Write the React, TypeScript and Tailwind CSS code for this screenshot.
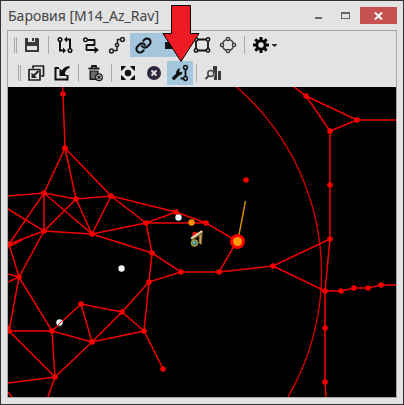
import type { ReactNode } from "react";
import { Link } from "lucide-react";

type ToolProps = { label: string; active?: boolean; children: ReactNode };

function Tool({ label, active = false, children }: ToolProps) {
  return (
    <button
      type="button"
      aria-label={label}
      aria-pressed={active}
      className={`flex h-6 w-[26px] shrink-0 items-center justify-center ${active ? "bg-[#a3c6dc]" : ""}`}
    >
      {children}
    </button>
  );
}

function Icon({ children, color = "#111" }: { children: ReactNode; color?: string }) {
  return (
    <svg width="18" height="18" viewBox="0 0 18 18" fill="none" stroke={color} strokeWidth="2" aria-hidden="true">
      {children}
    </svg>
  );
}

function Separator() {
  return (
    <div className="flex w-[7px] shrink-0 justify-center">
      <div className="h-[18px] w-px bg-[#a8a8a8]" />
    </div>
  );
}

function Grip() {
  return <div className="mr-0.5 h-4 w-[3px] shrink-0 border-x border-[#a8a8a8]" />;
}

const nodes: [number, number][] = [
  [63, 94], [65, 148], [44, 193], [76, 199], [111, 196], [44, 231], [92, 234],
  [9, 244], [19, 277], [9, 331], [52, 331], [81, 304], [122, 312], [92, 342],
  [55, 377], [176, 212], [146, 223], [206, 223], [152, 253], [149, 282],
  [181, 272], [219, 272], [144, 331], [163, 369], [246, 180], [273, 266],
  [306, 96], [357, 120], [330, 131], [330, 185], [330, 239], [325, 291],
  [341, 291], [354, 288], [368, 288], [381, 285], [325, 328], [325, 382],
];

const edges = [
  "M62.5 87L63 94L65 148L44 193L76 199L111 196L176 212L206 223L237 241L219 272L273 266L330 239",
  "M65 148L76 199L92 234L111 196L65 148",
  "M8 196L44 193V231L92 234L146 223L176 212",
  "M76 199L44 231L9 244L44 193L92 234L152 253L181 272H219",
  "M8 209L44 231L19 277L9 244M8 247L22 240",
  "M111 196L146 223H206M146 223L152 253L149 282L181 272",
  "M8 274L19 277L8 282M19 277L9 331H52L19 277",
  "M52 331L81 304L122 312L144 331L92 342L52 331L55 377L92 342L122 312L149 282L144 331L163 369",
  "M81 304L92 342M9 331L55 377L48 397M8 383L55 377M8 392L12 397M8 325L9 331",
  "M294 87L306 96L357 120H396M306 96L330 131L357 120",
  "M330 131V239L325 291V382L326 397M273 266L325 291H341L354 288H368L381 285H396",
];

function MapView() {
  return (
    <svg className="block aspect-[388/310] w-full bg-black" viewBox="8 87 388 310" role="img" aria-label="M14_Az_Rav">
      <circle cx="75.5" cy="273" r="246" fill="none" stroke="#d90000" strokeWidth="1.3" />
      <g fill="none" stroke="#f00000" strokeWidth="1.5">
        {edges.map((d) => <path key={d} d={d} />)}
      </g>
      <g fill="#f80000">
        {nodes.map(([x, y]) => <circle key={`${x}-${y}`} cx={x} cy={y} r="2.8" />)}
      </g>
      <path d="M245.500 201L238 240" stroke="#e09000" strokeWidth="1.4" />
      <circle cx="237.500" cy="241.500" r="7.500" fill="#f80000" />
      <circle cx="237.500" cy="241.500" r="4.500" fill="#ff9a00" />
      <g fill="#f0f6fa">
        <circle cx="178.500" cy="217.500" r="3.200" />
        <circle cx="121.500" cy="268.500" r="3.200" />
        <circle cx="59.500" cy="322.500" r="3.200" />
      </g>
      <path d="M56 327L62 321" stroke="#f00000" strokeWidth="1" />
      <circle cx="191.500" cy="222.500" r="3.200" fill="#ff8c00" />
      <circle cx="195" cy="234.500" r="2.800" fill="#e01010" />
      <path d="M191 239L203 230.500L201.500 245L198.500 243L199 236L193 240Z" fill="#8d6f3c" />
      <path d="M191 238.500L202 231" stroke="#eee0ba" strokeWidth="1.600" />
      <path d="M200.500 235V244" stroke="#c79b4e" strokeWidth="1.200" />
      <circle cx="194.500" cy="243" r="3" fill="#3f7f91" stroke="#a39a30" strokeWidth="1.400" />
      <circle cx="194" cy="242.500" r="1" fill="#8bd0dd" />
    </svg>
  );
}

export default function App() {
  return (
    <main className="relative border border-[#343236] bg-[#e3e3e3] px-1.5 pb-1.5 font-['Noto_Sans','Open_Sans',sans-serif]">
      <header className="flex h-[29px] items-center">
        <h1 className="min-w-0 flex-1 truncate pl-px text-[14px] leading-5 text-[#444]">Баровия [M14_Az_Rav]</h1>
        <button type="button" aria-label="Свернуть" className="flex h-[17px] w-[27px] items-center justify-center">
          <svg width="9" height="9" viewBox="0 0 9 9" aria-hidden="true"><path d="M1 6H8V8H1Z" fill="#666" /></svg>
        </button>
        <button type="button" aria-label="Развернуть" className="flex h-[17px] w-[27px] items-center justify-center">
          <svg width="9" height="9" viewBox="0 0 9 9" aria-hidden="true">
            <path d="M0 1H9V8H0ZM1 3V7H8V3Z" fill="#666" fillRule="evenodd" />
          </svg>
        </button>
        <button type="button" aria-label="Закрыть" className="ml-px flex h-[17px] w-[37px] items-center justify-center bg-[#c75050]">
          <svg width="9" height="8" viewBox="0 0 9 8" aria-hidden="true"><path d="M1 .5L8 7.500M8 .5L1 7.500" stroke="#fff" strokeWidth="2" /></svg>
        </button>
      </header>

      <section className="border border-[#a5a5a5]">
        <div role="toolbar" aria-label="Карта" className="flex h-7 items-center pl-1.5">
          <Grip />
          <Tool label="Сохранить">
            <Icon>
              <path d="M2 2H15L16 3V16H2ZM5 2V6H12V2ZM4 10V14H14V10Z" fill="#3a3a3a" fillRule="evenodd" stroke="none" />
              <path d="M9 2H11V5H9Z" fill="#3a3a3a" stroke="none" />
            </Icon>
          </Tool>
          <Separator />
          <Tool label="Двусторонняя связь">
            <Icon>
              <circle cx="4" cy="3.500" r="1.800" strokeWidth="1.500" />
              <circle cx="14" cy="14.500" r="1.800" strokeWidth="1.500" />
              <path d="M4 5.500V14.500H8M14 12.500V3.500H10" />
              <path d="M7 11.500L10 14.500L7 17.500ZM11 .5L8 3.500L11 6.500Z" fill="#111" stroke="none" />
            </Icon>
          </Tool>
          <Tool label="Односторонняя связь">
            <Icon>
              <circle cx="3.500" cy="3.800" r="1.800" strokeWidth="1.400" />
              <path d="M5.500 4H12.500V9H4.500V14H14" strokeWidth="1.800" strokeLinejoin="round" />
              <path d="M12.500 10.500L17 14L12.500 17.500Z" fill="#111" stroke="none" />
            </Icon>
          </Tool>
          <Tool label="Цепочка точек">
            <Icon color="#222">
              <g strokeWidth="1.500">
                <circle cx="14.500" cy="3.500" r="1.900" />
                <circle cx="9" cy="9" r="1.600" />
                <circle cx="3.500" cy="15" r="1.900" />
                <path d="M12.500 3.500H9.500V7M9 11V14.500H5.500" />
              </g>
            </Icon>
          </Tool>
          <Tool label="Связать" active><Link size={17} strokeWidth={3} color="#111" /></Tool>
          <Tool label="Область" active>
            <Icon><path d="M5 6H15V13H5Z" fill="#111" stroke="none" /></Icon>
          </Tool>
          <Separator />
          <Tool label="Прямоугольник">
            <Icon>
              <path d="M5 3.500H13M5 14.500H13M3 5.500V12.500M15 5.500V12.500" strokeWidth="1.800" />
              <g strokeWidth="1.500">
                <circle cx="3" cy="3.500" r="1.700" /><circle cx="15" cy="3.500" r="1.700" />
                <circle cx="3" cy="14.500" r="1.700" /><circle cx="15" cy="14.500" r="1.700" />
              </g>
            </Icon>
          </Tool>
          <Tool label="Окружность">
            <Icon color="#3a3a3a">
              <g strokeWidth="1.400" fill="#e3e3e3">
                <circle cx="9" cy="9" r="5.600" />
                <circle cx="9" cy="3" r="1.600" /><circle cx="9" cy="15" r="1.600" />
                <circle cx="3" cy="9" r="1.600" /><circle cx="15" cy="9" r="1.600" />
              </g>
            </Icon>
          </Tool>
          <Separator />
          <button type="button" aria-label="Настройки" className="flex h-6 shrink-0 items-center gap-0.5 pl-1">
            <Icon color="#080808">
              <circle cx="9" cy="9" r="4.200" strokeWidth="3" />
              <path d="M9 1V4M9 14V17M1 9H4M14 9H17M3.300 3.300L5.500 5.500M12.500 12.500L14.700 14.700M3.300 14.700L5.500 12.500M12.500 5.500L14.700 3.300" strokeWidth="3" />
            </Icon>
            <svg width="5" height="3" viewBox="0 0 5 3" aria-hidden="true"><path d="M0 0H5V1L2.500 3L0 1Z" fill="#333" /></svg>
          </button>
        </div>

        <div role="toolbar" aria-label="Граф" className="flex h-7 items-center pl-2.5">
          <Grip />
          <Tool label="Импорт">
            <Icon color="#222">
              <path d="M6 4.500V2H16.500V12H14" strokeWidth="1.700" strokeLinejoin="round" />
              <path d="M2 5.500H13V16H2Z" strokeWidth="1.700" strokeLinejoin="round" />
              <path d="M11.500 7L6 12.500" strokeWidth="2" />
              <path d="M4.500 8.500V14H10Z" fill="#222" stroke="none" />
            </Icon>
          </Tool>
          <Tool label="Загрузить">
            <Icon>
              <path d="M6 4H2.500V15.500H14.500V11" strokeWidth="2" />
              <path d="M16.500 2C12.500 2.500 10 4 9 6.500L6.500 4.500V12H14L11.800 9.500C12.500 6.500 14 5 16.500 4Z" fill="#111" stroke="none" />
            </Icon>
          </Tool>
          <Separator />
          <Tool label="Очистить">
            <Icon color="#1c1c1c">
              <path d="M2.500 4.500H13.500M6 3.500V2H10V3.500" strokeWidth="1.800" />
              <path d="M3.500 6.500H12.500V16H3.500Z" fill="#1c1c1c" stroke="none" />
              <path d="M6 7.500V14.500M8 7.500V14.500M10 7.500V11" stroke="#cfcfcf" strokeWidth="0.900" />
              <circle cx="13" cy="13.200" r="3.300" fill="#e3e3e3" strokeWidth="1.300" />
              <path d="M11.500 11.700L14.500 14.700M14.500 11.700L11.500 14.700" strokeWidth="1.400" />
            </Icon>
          </Tool>
          <Separator />
          <Tool label="Центрировать">
            <Icon>
              <path d="M2 2H7L5.500 4L4 5.500L2 7ZM16 2V7L14 5.500L12.500 4L11 2ZM2 16V11L4 12.500L5.500 14L7 16ZM16 16H11L12.500 14L14 12.500L16 11Z" fill="#111" stroke="none" />
              <circle cx="9" cy="9" r="3.200" fill="#111" stroke="none" />
            </Icon>
          </Tool>
          <Tool label="Отменить">
            <Icon>
              <circle cx="9" cy="9" r="7" fill="#30273d" stroke="none" />
              <path d="M6.500 6.500L11.500 11.500M11.500 6.500L6.500 11.500" stroke="#e3e3e3" strokeWidth="1.800" />
            </Icon>
          </Tool>
          <Tool label="Редактировать связи" active>
            <Icon>
              <path d="M2.800 14.200L7 10.300" strokeWidth="3.400" strokeLinecap="round" />
              <path d="M5 9.500C5 6.500 6.500 4.500 9.500 4.500L8 7L9.500 8.500L11.500 7.500C11.500 10.500 9.500 12 7 11.500Z" fill="#111" stroke="none" />
              <circle cx="14.500" cy="3.500" r="1.900" strokeWidth="1.500" />
              <circle cx="14.500" cy="14.500" r="1.900" strokeWidth="1.500" />
              <path d="M14.500 5.500V12.500M12.500 14.500H9.500" strokeWidth="1.800" />
            </Icon>
          </Tool>
          <Separator />
          <Tool label="Поиск по графу">
            <Icon color="#444">
              <path d="M9 2H13V16H10V13L11 10L9 6ZM14 7H17V16H14Z" fill="#3a3a3a" stroke="none" />
              <circle cx="6.800" cy="9.500" r="3" fill="#e3e3e3" strokeWidth="1.500" />
              <path d="M4.500 12L1.500 15" strokeWidth="2" />
            </Icon>
          </Tool>
        </div>
        <MapView />
      </section>

      <svg className="pointer-events-none absolute top-1 left-[161px]" width="38" height="58" viewBox="0 0 38 58" aria-hidden="true">
        <path d="M9.500 .5H28.500V28.500H37L19 56.500L1 28.500H9.500Z" fill="#ed1c24" stroke="#000" />
      </svg>
    </main>
  );
}
